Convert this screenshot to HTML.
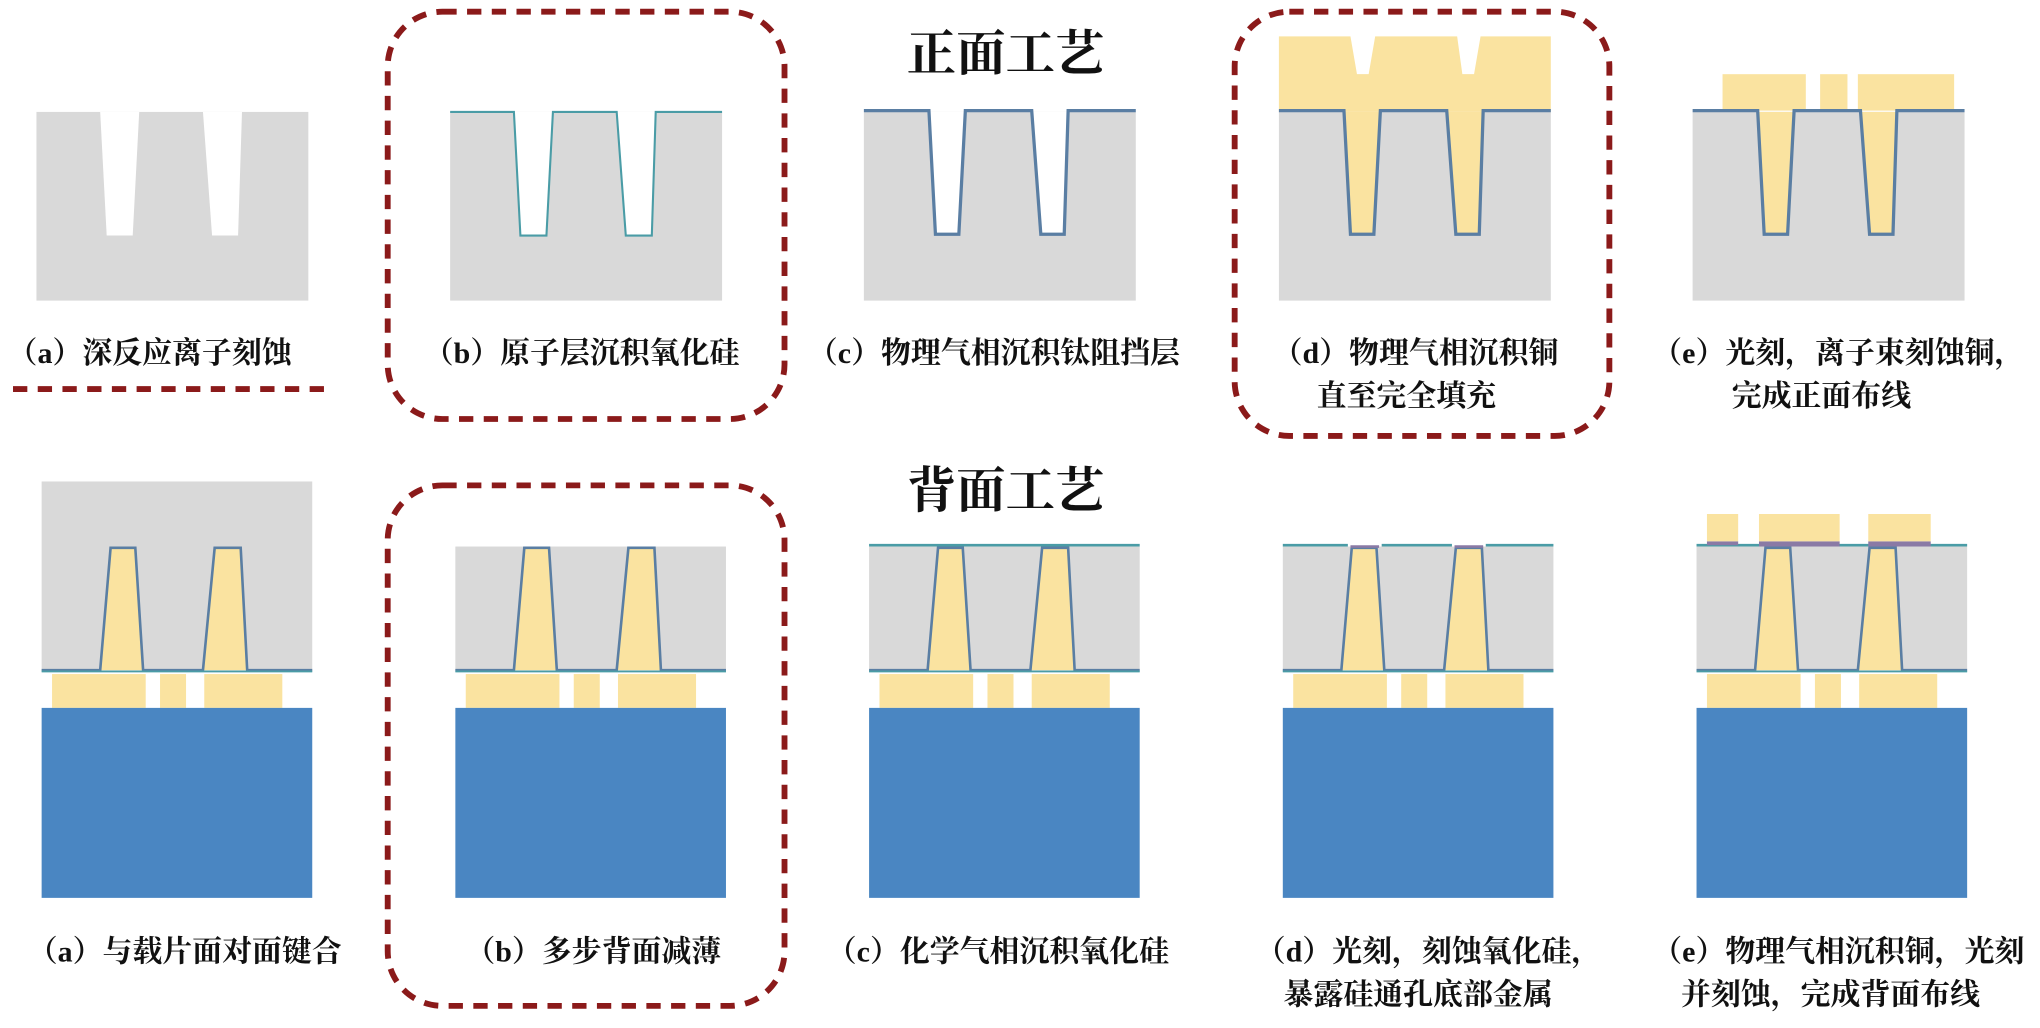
<!DOCTYPE html>
<html><head><meta charset="utf-8"><style>
html,body{margin:0;padding:0;background:#fff;}
svg{display:block;}
text{font-family:"Liberation Serif","Noto Serif CJK SC",serif;font-weight:bold;fill:#111;}
</style></head><body>
<svg width="2040" height="1028" viewBox="0 0 1568 790" preserveAspectRatio="none" xmlns="http://www.w3.org/2000/svg">

<text x="773" y="54" font-size="38" text-anchor="middle">正面工艺</text>
<text x="773" y="390" font-size="38" text-anchor="middle">背面工艺</text>

<line x1="10" y1="299" x2="250" y2="299" stroke="#8b1a1a" stroke-width="4.5" stroke-dasharray="11,8"/>
<rect x="298" y="9" width="305" height="313" rx="42" fill="none" stroke="#8b1a1a" stroke-width="4.5" stroke-dasharray="11,8"/>
<rect x="949" y="9" width="288" height="326" rx="42" fill="none" stroke="#8b1a1a" stroke-width="4.5" stroke-dasharray="11,8"/>
<rect x="298" y="373" width="305" height="400" rx="42" fill="none" stroke="#8b1a1a" stroke-width="4.5" stroke-dasharray="11,8"/>

<g transform="translate(28,86)">
<rect width="209" height="145" fill="#d9d9d9"/>
<polygon points="49,0 79,0 74,95 54,95" fill="#fff"/>
<polygon points="128,0 158,0 155,95 135,95" fill="#fff"/>
</g>
<g transform="translate(346,86)">
<rect width="209" height="145" fill="#d9d9d9"/>
<polygon points="49,0 79,0 74,95 54,95" fill="#fff"/>
<polygon points="128,0 158,0 155,95 135,95" fill="#fff"/>
<polyline points="0,0 49,0 54,95 74,95 79,0 128,0 135,95 155,95 158,0 209,0" fill="none" stroke="#4a9ca6" stroke-width="1.6"/>
</g>
<g transform="translate(664,86)">
<rect width="209" height="145" fill="#d9d9d9"/>
<polygon points="49,0 79,0 74,95 54,95" fill="#fff"/>
<polygon points="128,0 158,0 155,95 135,95" fill="#fff"/>
<polyline points="0,-1 50,-1 55,94 73,94 78,-1 129,-1 136,94 154,94 157,-1 209,-1" fill="none" stroke="#5a7ea3" stroke-width="2.5"/>
</g>
<g transform="translate(983,86)">
<rect width="209" height="145" fill="#d9d9d9"/>
<polygon points="0,0 0,-58 55,-58 60,-29 69,-29 74,-58 137,-58 141,-29 150,-29 155,-58 209,-58 209,0" fill="#fae3a0"/>
<polygon points="49,0 79,0 74,95 54,95" fill="#fae3a0"/>
<polygon points="128,0 158,0 155,95 135,95" fill="#fae3a0"/>
<polyline points="0,-1 50,-1 55,94 73,94 78,-1 129,-1 136,94 154,94 157,-1 209,-1" fill="none" stroke="#5a7ea3" stroke-width="2.5"/>
</g>
<g transform="translate(1301,86)">
<rect width="209" height="145" fill="#d9d9d9"/>
<polygon points="49,0 79,0 74,95 54,95" fill="#fae3a0"/>
<polygon points="128,0 158,0 155,95 135,95" fill="#fae3a0"/>
<rect x="23" y="-29" width="64" height="28" fill="#fae3a0"/>
<rect x="98" y="-29" width="21" height="28" fill="#fae3a0"/>
<rect x="127" y="-29" width="74" height="28" fill="#fae3a0"/>
<polyline points="0,-1 50,-1 55,94 73,94 78,-1 129,-1 136,94 154,94 157,-1 209,-1" fill="none" stroke="#5a7ea3" stroke-width="2.5"/>
</g>

<g font-size="23">
<text x="115" y="279" text-anchor="middle">（a）深反应离子刻蚀</text>
<text x="447" y="279" text-anchor="middle">（b）原子层沉积氧化硅</text>
<text x="764" y="279" text-anchor="middle">（c）物理气相沉积钛阻挡层</text>
<text x="1088" y="279" text-anchor="middle">（d）物理气相沉积铜</text>
<text x="1081" y="312" text-anchor="middle">直至完全填充</text>
<text x="1413" y="279" text-anchor="middle">（e）光刻，离子束刻蚀铜，</text>
<text x="1400" y="312" text-anchor="middle">完成正面布线</text>
</g>

<g transform="translate(32,420)">
<rect y="-50" width="208" height="145" fill="#d9d9d9"/>
<polygon points="45,95 53,1 72,1 78,95" fill="#fae3a0"/>
<polygon points="124,95 133,1 153,1 158,95" fill="#fae3a0"/>
<polyline points="0,95 45,95 53,1 72,1 78,95 124,95 133,1 153,1 158,95 208,95" fill="none" stroke="#5a7ea3" stroke-width="2"/>
<line x1="0" y1="96" x2="208" y2="96" stroke="#4a9ca6" stroke-width="1.5"/>
<rect x="8" y="98" width="72" height="26" fill="#fae3a0"/>
<rect x="91" y="98" width="20" height="26" fill="#fae3a0"/>
<rect x="125" y="98" width="60" height="26" fill="#fae3a0"/>
<rect x="0" y="124" width="208" height="146" fill="#4a86c2"/>
</g>
<g transform="translate(350,420)">
<rect width="208" height="95" fill="#d9d9d9"/>
<polygon points="45,95 53,1 72,1 78,95" fill="#fae3a0"/>
<polygon points="124,95 133,1 153,1 158,95" fill="#fae3a0"/>
<polyline points="0,95 45,95 53,1 72,1 78,95 124,95 133,1 153,1 158,95 208,95" fill="none" stroke="#5a7ea3" stroke-width="2"/>
<line x1="0" y1="96" x2="208" y2="96" stroke="#4a9ca6" stroke-width="1.5"/>
<rect x="8" y="98" width="72" height="26" fill="#fae3a0"/>
<rect x="91" y="98" width="20" height="26" fill="#fae3a0"/>
<rect x="125" y="98" width="60" height="26" fill="#fae3a0"/>
<rect x="0" y="124" width="208" height="146" fill="#4a86c2"/>
</g>
<g transform="translate(668,420)">
<rect width="208" height="95" fill="#d9d9d9"/>
<polygon points="45,95 53,1 72,1 78,95" fill="#fae3a0"/>
<polygon points="124,95 133,1 153,1 158,95" fill="#fae3a0"/>
<polyline points="0,95 45,95 53,1 72,1 78,95 124,95 133,1 153,1 158,95 208,95" fill="none" stroke="#5a7ea3" stroke-width="2"/>
<line x1="0" y1="96" x2="208" y2="96" stroke="#4a9ca6" stroke-width="1.5"/>
<line x1="0" y1="-1" x2="208" y2="-1" stroke="#4a9ca6" stroke-width="2"/>
<rect x="8" y="98" width="72" height="26" fill="#fae3a0"/>
<rect x="91" y="98" width="20" height="26" fill="#fae3a0"/>
<rect x="125" y="98" width="60" height="26" fill="#fae3a0"/>
<rect x="0" y="124" width="208" height="146" fill="#4a86c2"/>
</g>
<g transform="translate(986,420)">
<rect width="208" height="95" fill="#d9d9d9"/>
<polygon points="45,95 53,1 72,1 78,95" fill="#fae3a0"/>
<polygon points="124,95 133,1 153,1 158,95" fill="#fae3a0"/>
<polyline points="0,95 45,95 53,1 72,1 78,95 124,95 133,1 153,1 158,95 208,95" fill="none" stroke="#5a7ea3" stroke-width="2"/>
<line x1="0" y1="96" x2="208" y2="96" stroke="#4a9ca6" stroke-width="1.5"/>
<line x1="0" y1="-1" x2="50" y2="-1" stroke="#4a9ca6" stroke-width="2"/>
<line x1="76" y1="-1" x2="130" y2="-1" stroke="#4a9ca6" stroke-width="2"/>
<line x1="156" y1="-1" x2="208" y2="-1" stroke="#4a9ca6" stroke-width="2"/>
<line x1="52" y1="0" x2="74" y2="0" stroke="#8a7aa5" stroke-width="2"/>
<line x1="132" y1="0" x2="154" y2="0" stroke="#8a7aa5" stroke-width="2"/>
<rect x="8" y="98" width="72" height="26" fill="#fae3a0"/>
<rect x="91" y="98" width="20" height="26" fill="#fae3a0"/>
<rect x="125" y="98" width="60" height="26" fill="#fae3a0"/>
<rect x="0" y="124" width="208" height="146" fill="#4a86c2"/>
</g>
<g transform="translate(1304,420)">
<rect width="208" height="95" fill="#d9d9d9"/>
<polygon points="45,95 53,1 72,1 78,95" fill="#fae3a0"/>
<polygon points="124,95 133,1 153,1 158,95" fill="#fae3a0"/>
<polyline points="0,95 45,95 53,1 72,1 78,95 124,95 133,1 153,1 158,95 208,95" fill="none" stroke="#5a7ea3" stroke-width="2"/>
<line x1="0" y1="96" x2="208" y2="96" stroke="#4a9ca6" stroke-width="1.5"/>
<line x1="0" y1="-1" x2="208" y2="-1" stroke="#4a9ca6" stroke-width="2"/>
<rect x="8" y="-4" width="24" height="3" fill="#8a7aa5"/>
<rect x="48" y="-4" width="62" height="4" fill="#8a7aa5"/>
<rect x="132" y="-4" width="48" height="4" fill="#8a7aa5"/>
<rect x="8" y="-25" width="24" height="21" fill="#fae3a0"/>
<rect x="48" y="-25" width="62" height="21" fill="#fae3a0"/>
<rect x="132" y="-25" width="48" height="21" fill="#fae3a0"/>
<rect x="8" y="98" width="72" height="26" fill="#fae3a0"/>
<rect x="91" y="98" width="20" height="26" fill="#fae3a0"/>
<rect x="125" y="98" width="60" height="26" fill="#fae3a0"/>
<rect x="0" y="124" width="208" height="146" fill="#4a86c2"/>
</g>

<g font-size="23">
<text x="142" y="739" text-anchor="middle">（a）与载片面对面键合</text>
<text x="456" y="739" text-anchor="middle">（b）多步背面减薄</text>
<text x="767" y="739" text-anchor="middle">（c）化学气相沉积氧化硅</text>
<text x="1098" y="739" text-anchor="middle">（d）光刻，刻蚀氧化硅，</text>
<text x="1090" y="772" text-anchor="middle">暴露硅通孔底部金属</text>
<text x="1413" y="739" text-anchor="middle">（e）物理气相沉积铜，光刻</text>
<text x="1407" y="772" text-anchor="middle">并刻蚀，完成背面布线</text>
</g>
</svg>
</body></html>
